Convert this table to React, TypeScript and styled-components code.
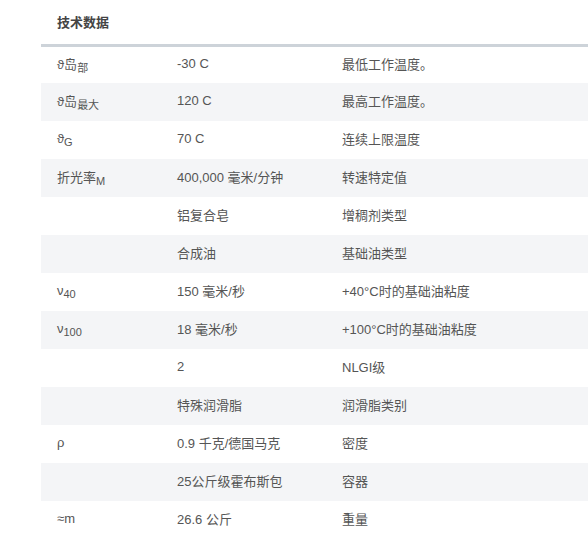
import React from "react";
import styled, { createGlobalStyle } from "styled-components";

const Global = createGlobalStyle`
  html, body { margin: 0; padding: 0; background: #fff; }
  body { font-family: "Liberation Sans", Arial, "Noto Sans CJK SC", sans-serif; }
`;

const Wrap = styled.div`
  padding-left: 41px;
  width: 547px;
  overflow: hidden;
`;

const Table = styled.table`
  border-collapse: collapse;
  width: 560px;
  font-size: 13px;
  color: #555;
  table-layout: fixed;
`;

const HeadCell = styled.th`
  box-sizing: border-box;
  text-align: left;
  font-weight: bold;
  color: #444;
  height: 45px;
  padding: 0 16px 1px 16px;
  border-bottom: 3px solid #cdd3d9;
  vertical-align: middle;
`;

const Row = styled.tr<{ $alt: boolean }>`
  background: ${(p) => (p.$alt ? "#f4f5f7" : "#fff")};
`;

const Cell = styled.td`
  box-sizing: border-box;
  height: 38px;
  padding: 0 16px 3px 16px;
  vertical-align: middle;
  white-space: nowrap;
`;

const Sub = styled.sub`
  font-size: 11px;
  vertical-align: -3px;
  line-height: 0;
`;

type R = { sym: React.ReactNode; val: string; desc: string };

const rows: R[] = [
  { sym: <>ϑ岛<Sub>部</Sub></>, val: "-30 C", desc: "最低工作温度。" },
  { sym: <>ϑ岛<Sub>最大</Sub></>, val: "120 C", desc: "最高工作温度。" },
  { sym: <>ϑ<Sub>G</Sub></>, val: "70 C", desc: "连续上限温度" },
  { sym: <>折光率<Sub>M</Sub></>, val: "400,000 毫米/分钟", desc: "转速特定值" },
  { sym: "", val: "铝复合皂", desc: "增稠剂类型" },
  { sym: "", val: "合成油", desc: "基础油类型" },
  { sym: <>ν<Sub>40</Sub></>, val: "150 毫米/秒", desc: "+40°C时的基础油粘度" },
  { sym: <>ν<Sub>100</Sub></>, val: "18 毫米/秒", desc: "+100°C时的基础油粘度" },
  { sym: "", val: "2", desc: "NLGI级" },
  { sym: "", val: "特殊润滑脂", desc: "润滑脂类别" },
  { sym: "ρ", val: "0.9 千克/德国马克", desc: "密度" },
  { sym: "", val: "25公斤级霍布斯包", desc: "容器" },
  { sym: <>≈m</>, val: "26.6 公斤", desc: "重量" },
];

export default function App() {
  return (
    <>
      <Global />
      <Wrap>
        <Table>
          <colgroup>
            <col style={{ width: 120 }} />
            <col style={{ width: 165 }} />
            <col />
          </colgroup>
          <thead>
            <tr>
              <HeadCell>技术数据</HeadCell>
              <HeadCell />
              <HeadCell />
            </tr>
          </thead>
          <tbody>
            {rows.map((r, i) => (
              <Row key={i} $alt={i % 2 === 1}>
                <Cell>{r.sym}</Cell>
                <Cell>{r.val}</Cell>
                <Cell>{r.desc}</Cell>
              </Row>
            ))}
          </tbody>
        </Table>
      </Wrap>
    </>
  );
}
